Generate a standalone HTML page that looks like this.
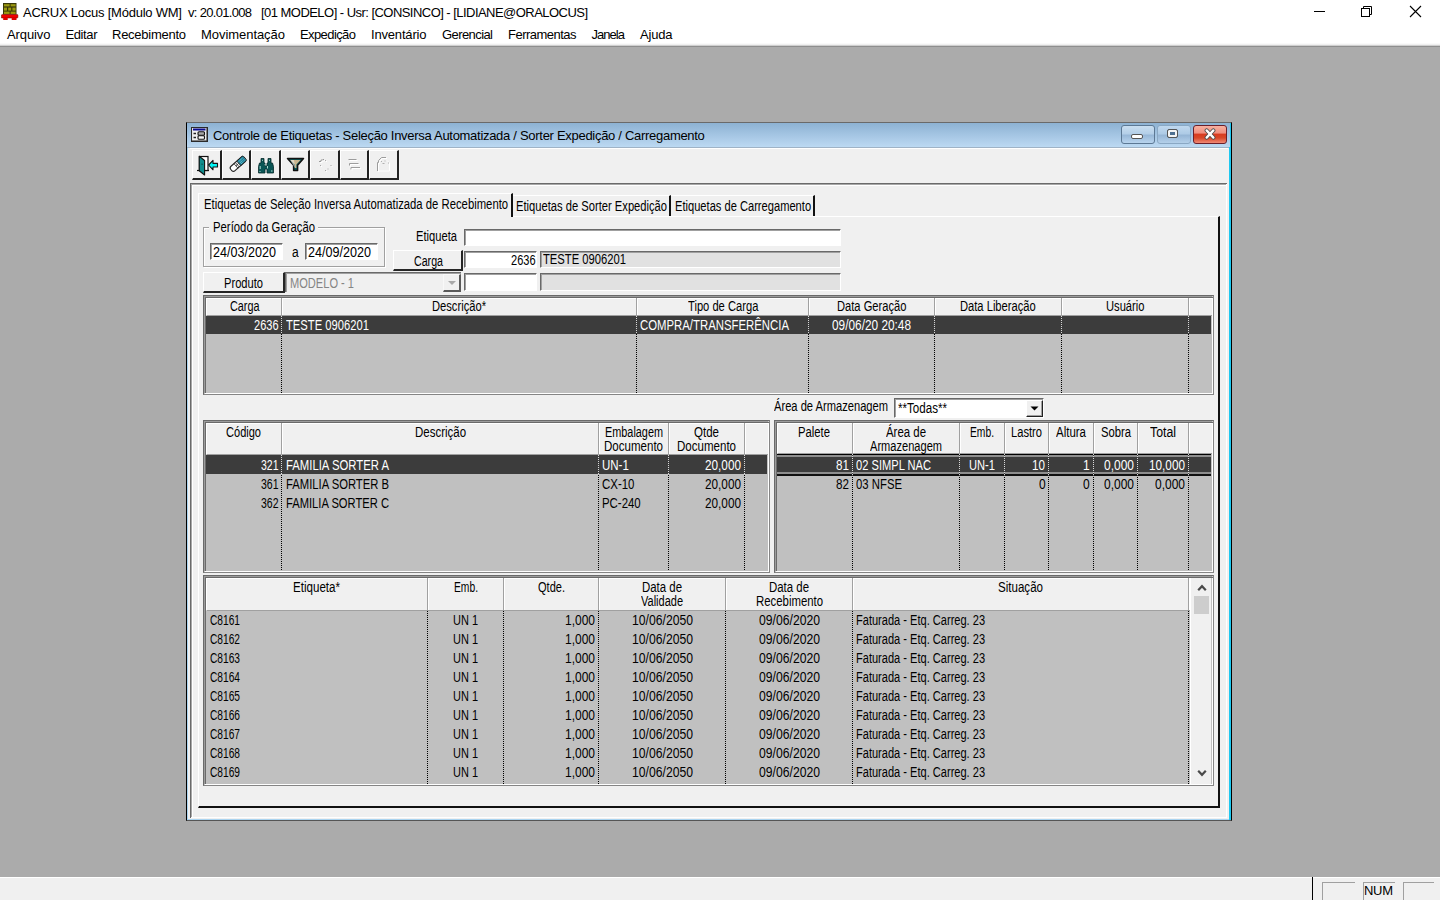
<!DOCTYPE html>
<html><head><meta charset="utf-8">
<style>
*{box-sizing:border-box}
html,body{margin:0;padding:0}
body{width:1440px;height:900px;position:relative;overflow:hidden;background:#ababab;font-family:"Liberation Sans",sans-serif;color:#000}
.a{position:absolute}
.t{position:absolute;white-space:pre}
</style></head><body>
<div class="a" style="left:0px;top:0px;width:1440px;height:46px;background:#fff"></div>
<div class="a" style="left:0px;top:43px;width:1440px;height:1px;background:#fafafa"></div>
<div class="a" style="left:0px;top:44px;width:1440px;height:1px;background:#f0f0f0"></div>
<div class="a" style="left:0px;top:45px;width:1440px;height:1px;background:#cfcfcf"></div>
<div class="a" style="left:0px;top:46px;width:1440px;height:1px;background:#8e8e8e"></div>
<svg class="a" style="left:1px;top:3px" width="18" height="18" viewBox="0 0 18 18">
<rect x="2" y="0" width="13.5" height="11.6" fill="#3a3808"/>
<rect x="3" y="1.2" width="5.6" height="2.2" fill="#9c9a10"/><rect x="9.6" y="1.2" width="5" height="2.2" fill="#9c9a10"/>
<rect x="3" y="4.6" width="3" height="3" fill="#9c9a10"/><rect x="7.2" y="4.6" width="3" height="3" fill="#9c9a10"/><rect x="11.4" y="4.6" width="3.2" height="3" fill="#9c9a10"/>
<rect x="3" y="8.6" width="5.6" height="2.4" fill="#9c9a10"/><rect x="9.6" y="8.6" width="5" height="2.4" fill="#9c9a10"/>
<path d="M0.5 12.2Q0.5 11.4 1.5 11.4H16Q16.9 11.4 16.9 12.2V14.3Q16.9 15 16 15H0.5Z" fill="#f00000" stroke="#600" stroke-width="0.5"/>
<rect x="2.2" y="14.6" width="4.5" height="2.4" fill="#e00000"/><rect x="10.7" y="14.6" width="4.8" height="2.4" fill="#e00000"/>
</svg>
<div class="t" style="left:23px;top:6.00px;font-size:13px;line-height:13px;letter-spacing:-0.228px;color:#000;">ACRUX Locus [Módulo WM]</div>
<div class="t" style="left:188px;top:6.00px;font-size:13px;line-height:13px;letter-spacing:-0.689px;color:#000;">v: 20.01.008</div>
<div class="t" style="left:261px;top:6.00px;font-size:13px;line-height:13px;letter-spacing:-0.539px;color:#000;">[01 MODELO] - Usr: [CONSINCO] - [LIDIANE@ORALOCUS]</div>
<div class="a" style="left:1314px;top:11px;width:11px;height:1px;background:#000"></div>
<svg class="a" style="left:1360px;top:5px" width="14" height="13" viewBox="0 0 14 13">
<rect x="1.5" y="3.5" width="8" height="8" fill="none" stroke="#000"/>
<path d="M3.5 3.5V1.5h8v8h-2" fill="none" stroke="#000"/></svg>
<svg class="a" style="left:1409px;top:5px" width="13" height="13" viewBox="0 0 13 13">
<path d="M1 1L12 12M12 1L1 12" stroke="#000" stroke-width="1.1"/></svg>
<div class="t" style="left:7px;top:28.00px;font-size:13px;line-height:13px;letter-spacing:-0.099px;color:#000;">Arquivo</div>
<div class="t" style="left:65.5px;top:28.00px;font-size:13px;line-height:13px;letter-spacing:-0.394px;color:#000;">Editar</div>
<div class="t" style="left:112px;top:28.00px;font-size:13px;line-height:13px;letter-spacing:-0.263px;color:#000;">Recebimento</div>
<div class="t" style="left:201px;top:28.00px;font-size:13px;line-height:13px;letter-spacing:-0.051px;color:#000;">Movimentação</div>
<div class="t" style="left:300px;top:28.00px;font-size:13px;line-height:13px;letter-spacing:-0.592px;color:#000;">Expedição</div>
<div class="t" style="left:371px;top:28.00px;font-size:13px;line-height:13px;letter-spacing:-0.179px;color:#000;">Inventário</div>
<div class="t" style="left:442px;top:28.00px;font-size:13px;line-height:13px;letter-spacing:-0.582px;color:#000;">Gerencial</div>
<div class="t" style="left:508px;top:28.00px;font-size:13px;line-height:13px;letter-spacing:-0.520px;color:#000;">Ferramentas</div>
<div class="t" style="left:591.5px;top:28.00px;font-size:13px;line-height:13px;letter-spacing:-0.966px;color:#000;">Janela</div>
<div class="t" style="left:640px;top:28.00px;font-size:13px;line-height:13px;letter-spacing:-0.191px;color:#000;">Ajuda</div>
<div class="a" style="left:0px;top:877px;width:1440px;height:23px;background:#f0f0f0"></div>
<div class="a" style="left:0px;top:877px;width:1440px;height:1px;background:#fff"></div>
<div class="a" style="left:1312px;top:877px;width:1px;height:23px;background:#000"></div>
<div class="a" style="left:1322px;top:882px;width:33px;height:18px;border-top:1px solid #a0a0a0;border-left:1px solid #a0a0a0"></div>
<div class="a" style="left:1363px;top:882px;width:32px;height:18px;border-top:1px solid #a0a0a0;border-left:1px solid #a0a0a0"></div>
<div class="a" style="left:1403px;top:882px;width:31px;height:18px;border-top:1px solid #a0a0a0;border-left:1px solid #a0a0a0"></div>
<div class="t" style="left:1364px;top:884.00px;font-size:13px;line-height:13px;letter-spacing:-0.305px;color:#000;">NUM</div>
<div class="a" style="left:186px;top:122px;width:1046px;height:699px;background:#f0f0f0;border:1px solid #000;border-top-color:#6a6a6a;border-bottom-color:#555"></div>
<div class="a" style="left:187px;top:123px;width:1044px;height:697px;border:1px solid #aad4f0"></div>
<div class="a" style="left:1229px;top:123px;width:2px;height:697px;background:#1ec8f0"></div>
<div class="a" style="left:187px;top:123px;width:1043px;height:24px;background:linear-gradient(#8db2d3,#a9c9e6 60%,#bcd9f2)"></div>
<svg class="a" style="left:191px;top:127px" width="17" height="15" viewBox="0 0 17 15">
<rect x="0" y="0" width="17" height="15" fill="#2a2a2a"/>
<rect x="1" y="1" width="14.5" height="12.5" fill="#dcdcdc"/>
<rect x="1.5" y="1.5" width="13.5" height="11.5" fill="#f0f0f0"/>
<rect x="2" y="1.5" width="12.5" height="2" fill="#0a0a90"/>
<path d="M2.5 6.5h2.5M2.5 10.5h2.5" stroke="#222" stroke-width="1.3"/>
<rect x="7" y="4.8" width="6.5" height="3.4" rx="1" fill="#a8a8a8" stroke="#111" stroke-width="1.1"/>
<rect x="7" y="8.8" width="6.5" height="3.4" rx="1" fill="#f4f4f4" stroke="#111" stroke-width="1.1"/>
</svg>
<div class="t" style="left:213px;top:129.00px;font-size:13px;line-height:13px;letter-spacing:-0.292px;color:#000;">Controle de Etiquetas - Seleção Inversa Automatizada / Sorter Expedição / Carregamento</div>
<div class="a" style="left:1121px;top:125px;width:34px;height:19px;border:1px solid #5c7894;border-radius:3px;background:linear-gradient(#c9def0,#b4cfe8 45%,#98b8d8 55%,#b8d4ee)"></div>
<div class="a" style="left:1131px;top:134px;width:12px;height:5px;background:#fff;border:1px solid #555;border-radius:2px"></div>
<div class="a" style="left:1157px;top:125px;width:34px;height:19px;border:1px solid #8aa8c4;border-radius:3px;background:linear-gradient(#c0d8ee,#aecbe6 45%,#96b6d6 55%,#b4d0ea)"></div>
<div class="a" style="left:1167px;top:129px;width:11px;height:9px;border:1px solid #555;border-radius:2px;background:#4f7090;box-shadow:inset 0 0 0 2px #f4f4f4"></div>
<div class="a" style="left:1193px;top:125px;width:34px;height:19px;border:1px solid #6a1f2a;border-radius:3px;background:linear-gradient(#f8b0a0,#f09080 40%,#d83c20 50%,#d84828 70%,#f08a78)"></div>
<svg class="a" style="left:1203px;top:128px" width="14" height="12" viewBox="0 0 14 12">
<path d="M3.6 2.4L10.4 9.6M10.4 2.4L3.6 9.6" stroke="#4a4a4a" stroke-width="4" stroke-linecap="round"/>
<path d="M3.6 2.4L10.4 9.6M10.4 2.4L3.6 9.6" stroke="#fff" stroke-width="2.3" stroke-linecap="round"/></svg>
<div class="a" style="left:187px;top:147px;width:1042px;height:1px;background:#9fb3c6"></div>
<div class="a" style="left:190px;top:148px;width:1038px;height:1px;background:#fff"></div>
<div class="a" style="left:192px;top:150px;width:30px;height:30px;border-left:1px solid #fff;border-top:1px solid #fff;border-right:2px solid #222;border-bottom:2px solid #222;background:#f0f0f0"></div>
<div class="a" style="left:222px;top:150px;width:29px;height:30px;border-left:1px solid #fff;border-top:1px solid #fff;border-right:2px solid #222;border-bottom:2px solid #222;background:#f0f0f0"></div>
<div class="a" style="left:251px;top:150px;width:30px;height:30px;border-left:1px solid #fff;border-top:1px solid #fff;border-right:2px solid #222;border-bottom:2px solid #222;background:#f0f0f0"></div>
<div class="a" style="left:281px;top:150px;width:29px;height:30px;border-left:1px solid #fff;border-top:1px solid #fff;border-right:2px solid #222;border-bottom:2px solid #222;background:#f0f0f0"></div>
<div class="a" style="left:310px;top:150px;width:30px;height:30px;border-left:1px solid #fff;border-top:1px solid #fff;border-right:2px solid #222;border-bottom:2px solid #222;background:#f0f0f0"></div>
<div class="a" style="left:340px;top:150px;width:29px;height:30px;border-left:1px solid #fff;border-top:1px solid #fff;border-right:2px solid #222;border-bottom:2px solid #222;background:#f0f0f0"></div>
<div class="a" style="left:369px;top:150px;width:30px;height:30px;border-left:1px solid #fff;border-top:1px solid #fff;border-right:2px solid #222;border-bottom:2px solid #222;background:#f0f0f0"></div>
<svg class="a" style="left:196px;top:154px" width="24" height="24" viewBox="0 0 24 24">
<path d="M1 16.5H13" stroke="#111" stroke-width="1.2"/>
<rect x="3.5" y="2.5" width="8.5" height="14" fill="#fff" stroke="#111" stroke-width="1.2"/>
<path d="M3.2 2.3L8.6 6.5V21L3.2 16.8Z" fill="#0f8e8e" stroke="#111" stroke-width="1.1" stroke-linejoin="round"/>
<path d="M5.5 10.2h1.2" stroke="#0a3030" stroke-width="0.9"/>
<path d="M12.6 11L17 6.4V9.4H21.5V13H17V15.8Z" fill="#00f4f4" stroke="#111" stroke-width="1.1" stroke-linejoin="round"/>
</svg>
<svg class="a" style="left:226px;top:152px" width="24" height="24" viewBox="0 0 24 24">
<g transform="translate(12,12) rotate(-42)">
<rect x="-9" y="-3" width="18" height="6" rx="2.3" fill="#fff" stroke="#222" stroke-width="1.1"/>
<path d="M1 -3H8 Q9 -3 9 -2V2Q9 3 8 3H1Z" fill="#1f7f98" stroke="#222" stroke-width="0.9"/>
<path d="M2.3 -1.4H8.3M2.3 0.4H8.3M2.3 2H8.3" stroke="#8ae6f0" stroke-width="0.8" stroke-dasharray="1 0.8"/>
<path d="M-2.8 -3.1V3.1M-1 -3.1V3.1M-2.8 0H1" stroke="#333" stroke-width="0.8"/>
</g></svg>
<svg class="a" style="left:257px;top:157px" width="18" height="18" viewBox="0 0 18 18">
<path d="M4 1.5h3v4.5h1v3h2v-3h1v-4.5h3v4.5h1.5l1 3.5v6.5h-6.5v-4h-2v4h-6.5v-6.5l1-3.5h1.5Z" fill="#0b5656" stroke="#062a2a" stroke-width="0.8"/>
<path d="M5.5 2.8v1M12.5 2.8v1M3.2 9v3M10.5 9v2.5M2.5 14.5h1M14 14h1.5M7.5 7.8h1" stroke="#bfe8e0" stroke-width="0.9"/>
</svg>
<svg class="a" style="left:286px;top:157px" width="19" height="16" viewBox="0 0 19 16">
<path d="M1.5 1.6H17.5L11.6 8.2V13.4H7.6V8.2Z" fill="#0a5a5a" stroke="#111" stroke-width="1.5" stroke-linejoin="round"/>
<path d="M4.3 3.1H14.5L10.4 7.6V11H8.9V7.6Z" fill="#c8b48e"/>
<path d="M4.3 3.1H8L8.9 9V11" fill="#f4f0e8" opacity="0.6"/>
</svg>
<svg class="a" style="left:316px;top:155px" width="20" height="20" viewBox="0 0 20 20">
<path d="M3 6.5h2v-1.5h2.5v-1" fill="none" stroke="#9a9a9a" stroke-width="1"/>
<path d="M4 7.5h2v-1.5h2.5v-1" fill="none" stroke="#fff" stroke-width="1"/>
<path d="M9 5.5h1M4 10.5h1M14.5 10.5h1M9 15.5h1M11.5 14h1" stroke="#a8a8a8" stroke-width="1"/>
<path d="M10 6.5h1M5 11.5h1M15.5 11.5h1M10 16.5h1" stroke="#fff" stroke-width="1"/>
</svg>
<svg class="a" style="left:345px;top:155px" width="20" height="18" viewBox="0 0 20 18">
<path d="M3.5 4.5h8M4.5 8.5h9M4.5 8.5v2M6 12.5h9M6 12.5v2" fill="none" stroke="#9c9c9c" stroke-width="1"/>
<path d="M4.5 5.5h8M5.5 9.5h9M5.5 9.5v2M7 13.5h9M7 13.5v2" fill="none" stroke="#fff" stroke-width="1"/>
</svg>
<svg class="a" style="left:374px;top:154px" width="20" height="20" viewBox="0 0 20 20">
<path d="M3.5 17V8.5H4.5V6.5L7.5 3.5H12" fill="none" stroke="#9c9c9c" stroke-width="1"/>
<path d="M4.5 18V9.5H5.5V7.5L8.5 4.5H13M13 6.5L15.5 9V17H4.5" fill="none" stroke="#fff" stroke-width="1"/>
<path d="M7 7.5h1M10.5 7h1M8.5 9.5h2M14 9h1" stroke="#b0b0b0" stroke-width="1"/>
</svg>
<div class="a" style="left:190px;top:183px;width:1037px;height:1px;background:#6a6a6a"></div>
<div class="a" style="left:190px;top:184px;width:1037px;height:1px;background:#a8a8a8"></div>
<div class="a" style="left:190px;top:183px;width:1px;height:635px;background:#6a6a6a"></div>
<div class="a" style="left:191px;top:184px;width:1px;height:634px;background:#a8a8a8"></div>
<div class="a" style="left:192px;top:185px;width:1035px;height:1px;background:#fff"></div>
<div class="a" style="left:192px;top:185px;width:1px;height:632px;background:#fff"></div>
<div class="a" style="left:1226px;top:184px;width:1px;height:634px;background:#fff"></div>
<div class="a" style="left:191px;top:817px;width:1036px;height:1px;background:#fff"></div>
<div class="a" style="left:198px;top:216px;width:1022px;height:592px;border-top:1px solid #fff;border-left:1px solid #fff;border-right:2px solid #111;border-bottom:2px solid #111"></div>
<div class="a" style="left:198px;top:193px;width:315px;height:24px;border-top:1px solid #fff;border-left:1px solid #fff;border-right:2px solid #111;background:#f0f0f0"></div>
<div class="a" style="left:513px;top:195px;width:158px;height:21px;border-top:1px solid #fff;border-right:2px solid #111"></div>
<div class="a" style="left:671px;top:195px;width:144px;height:21px;border-top:1px solid #fff;border-right:2px solid #111"></div>
<div class="t" style="left:204px;top:197.15px;font-size:14px;line-height:14px;color:#000;transform:scaleX(0.8073);transform-origin:0 0;">Etiquetas de Seleção Inversa Automatizada de Recebimento</div>
<div class="t" style="left:516px;top:199.15px;font-size:14px;line-height:14px;color:#000;transform:scaleX(0.7987);transform-origin:0 0;">Etiquetas de Sorter Expedição</div>
<div class="t" style="left:675px;top:199.15px;font-size:14px;line-height:14px;color:#000;transform:scaleX(0.7947);transform-origin:0 0;">Etiquetas de Carregamento</div>
<div class="a" style="left:203px;top:227px;width:182px;height:40px;border:1px solid #a0a0a0;box-shadow:1px 1px 0 #fff, inset 1px 1px 0 #fff"></div>
<div class="a" style="left:209px;top:222px;width:109px;height:10px;background:#f0f0f0"></div>
<div class="t" style="left:213px;top:220.15px;font-size:14px;line-height:14px;color:#000;transform:scaleX(0.8093);transform-origin:0 0;">Período da Geração</div>
<div class="a" style="left:210px;top:243px;width:73px;height:17px;background:#fff;border-top:1px solid #696969;border-left:1px solid #696969;border-bottom:1px solid #fff;border-right:1px solid #fff;box-shadow:inset 1px 1px 0 #a0a0a0"></div>
<div class="t" style="left:213px;top:245.15px;font-size:14px;line-height:14px;color:#000;transform:scaleX(0.8996);transform-origin:0 0;">24/03/2020</div>
<div class="t" style="left:292px;top:245.15px;font-size:14px;line-height:14px;color:#000;transform:scaleX(0.8574);transform-origin:0 0;">a</div>
<div class="a" style="left:305px;top:243px;width:73px;height:17px;background:#fff;border-top:1px solid #696969;border-left:1px solid #696969;border-bottom:1px solid #fff;border-right:1px solid #fff;box-shadow:inset 1px 1px 0 #a0a0a0"></div>
<div class="t" style="left:308px;top:245.15px;font-size:14px;line-height:14px;color:#000;transform:scaleX(0.8996);transform-origin:0 0;">24/09/2020</div>
<div class="t" style="left:416px;top:229.15px;font-size:14px;line-height:14px;color:#000;transform:scaleX(0.7983);transform-origin:0 0;">Etiqueta</div>
<div class="a" style="left:464px;top:229px;width:377px;height:17px;background:#fff;border-top:1px solid #696969;border-left:1px solid #696969;border-bottom:1px solid #fff;border-right:1px solid #fff;box-shadow:inset 1px 1px 0 #a0a0a0"></div>
<div class="a" style="left:393px;top:250px;width:70px;height:21px;background:#f0f0f0;border-top:1px solid #fff;border-left:1px solid #fff;border-bottom:2px solid #262626;border-right:2px solid #262626"></div>
<div class="t" style="left:414px;top:254.15px;font-size:14px;line-height:14px;color:#000;transform:scaleX(0.7610);transform-origin:0 0;">Carga</div>
<div class="a" style="left:464px;top:251px;width:73px;height:17px;background:#fff;border-top:1px solid #696969;border-left:1px solid #696969;border-bottom:1px solid #fff;border-right:1px solid #fff;box-shadow:inset 1px 1px 0 #a0a0a0"></div>
<div class="t" style="left:510.5px;top:252.55px;font-size:14px;line-height:14px;color:#000;transform:scaleX(0.7871);transform-origin:0 0;">2636</div>
<div class="a" style="left:540px;top:251px;width:301px;height:17px;background:#e1e1e1;border-top:1px solid #696969;border-left:1px solid #696969;border-bottom:1px solid #fff;border-right:1px solid #fff;box-shadow:inset 1px 1px 0 #a0a0a0"></div>
<div class="t" style="left:543px;top:252.15px;font-size:14px;line-height:14px;color:#000;transform:scaleX(0.8021);transform-origin:0 0;">TESTE 0906201</div>
<div class="a" style="left:203px;top:272px;width:82px;height:21px;background:#f0f0f0;border-top:1px solid #fff;border-left:1px solid #fff;border-bottom:2px solid #262626;border-right:2px solid #262626"></div>
<div class="t" style="left:224px;top:276.15px;font-size:14px;line-height:14px;color:#000;transform:scaleX(0.7957);transform-origin:0 0;">Produto</div>
<div class="a" style="left:285px;top:272px;width:176px;height:20px;background:#f0f0f0;border-top:1px solid #6a6a6a;border-left:1px solid #6a6a6a;box-shadow:inset 1px 1px 0 #a0a0a0"></div>
<div class="t" style="left:290px;top:276.15px;font-size:14px;line-height:14px;color:#858585;transform:scaleX(0.7912);transform-origin:0 0;">MODELO - 1</div>
<div class="a" style="left:443px;top:274px;width:18px;height:18px;background:#f0f0f0;border-top:1px solid #f8f8f8;border-left:1px solid #f8f8f8;border-bottom:2px solid #5a5a5a;border-right:2px solid #5a5a5a"></div>
<svg class="a" style="left:447px;top:280px" width="10" height="6" viewBox="0 0 10 6"><path d="M1 1h8L5 5Z" fill="#a8a8a8"/></svg>
<div class="a" style="left:464px;top:273px;width:73px;height:18px;background:#fff;border-top:1px solid #696969;border-left:1px solid #696969;border-bottom:1px solid #fff;border-right:1px solid #fff;box-shadow:inset 1px 1px 0 #a0a0a0"></div>
<div class="a" style="left:540px;top:273px;width:301px;height:18px;background:#e1e1e1;border-top:1px solid #696969;border-left:1px solid #696969;border-bottom:1px solid #fff;border-right:1px solid #fff;box-shadow:inset 1px 1px 0 #a0a0a0"></div>
<div class="a" style="left:203px;top:295px;width:1011px;height:100px;background:#c0c0c0;border-top:1px solid #6a6a6a;border-left:1px solid #6a6a6a;border-bottom:1px solid #858585;border-right:1px solid #858585"></div>
<div class="a" style="left:204px;top:296px;width:1009px;height:98px;border-top:1px solid #9c9c9c;border-left:1px solid #9c9c9c;border-bottom:1px solid #fff;border-right:1px solid #fff"></div>
<div class="a" style="left:205px;top:297px;width:1008px;height:1px;background:#6a6a6a"></div>
<div class="a" style="left:205px;top:297px;width:1px;height:96px;background:#6a6a6a"></div>
<div class="a" style="left:206px;top:298px;width:1006px;height:18px;background:#f0f0f0;border-top:1px solid #fff;border-left:1px solid #fff;border-bottom:1px solid #a0a0a0"></div>
<div class="a" style="left:281px;top:298px;width:1px;height:18px;background:#a0a0a0"></div>
<div class="a" style="left:282px;top:298px;width:1px;height:17px;background:#fff"></div>
<div class="a" style="left:636px;top:298px;width:1px;height:18px;background:#a0a0a0"></div>
<div class="a" style="left:637px;top:298px;width:1px;height:17px;background:#fff"></div>
<div class="a" style="left:808px;top:298px;width:1px;height:18px;background:#a0a0a0"></div>
<div class="a" style="left:809px;top:298px;width:1px;height:17px;background:#fff"></div>
<div class="a" style="left:934px;top:298px;width:1px;height:18px;background:#a0a0a0"></div>
<div class="a" style="left:935px;top:298px;width:1px;height:17px;background:#fff"></div>
<div class="a" style="left:1061px;top:298px;width:1px;height:18px;background:#a0a0a0"></div>
<div class="a" style="left:1062px;top:298px;width:1px;height:17px;background:#fff"></div>
<div class="a" style="left:1188px;top:298px;width:1px;height:18px;background:#a0a0a0"></div>
<div class="a" style="left:1189px;top:298px;width:1px;height:17px;background:#fff"></div>
<div class="a" style="left:206px;top:316px;width:1005px;height:18px;background:#3c3c3c"></div>
<div class="a" style="left:281px;top:316px;width:1px;height:77px;background:repeating-linear-gradient(to bottom,#000 0 1px,transparent 1px 2px)"></div>
<div class="a" style="left:281px;top:316px;width:1px;height:18px;background:repeating-linear-gradient(to bottom,#d8d8d8 0 1px,#3c3c3c 1px 2px)"></div>
<div class="a" style="left:636px;top:316px;width:1px;height:77px;background:repeating-linear-gradient(to bottom,#000 0 1px,transparent 1px 2px)"></div>
<div class="a" style="left:636px;top:316px;width:1px;height:18px;background:repeating-linear-gradient(to bottom,#d8d8d8 0 1px,#3c3c3c 1px 2px)"></div>
<div class="a" style="left:808px;top:316px;width:1px;height:77px;background:repeating-linear-gradient(to bottom,#000 0 1px,transparent 1px 2px)"></div>
<div class="a" style="left:808px;top:316px;width:1px;height:18px;background:repeating-linear-gradient(to bottom,#d8d8d8 0 1px,#3c3c3c 1px 2px)"></div>
<div class="a" style="left:934px;top:316px;width:1px;height:77px;background:repeating-linear-gradient(to bottom,#000 0 1px,transparent 1px 2px)"></div>
<div class="a" style="left:934px;top:316px;width:1px;height:18px;background:repeating-linear-gradient(to bottom,#d8d8d8 0 1px,#3c3c3c 1px 2px)"></div>
<div class="a" style="left:1061px;top:316px;width:1px;height:77px;background:repeating-linear-gradient(to bottom,#000 0 1px,transparent 1px 2px)"></div>
<div class="a" style="left:1061px;top:316px;width:1px;height:18px;background:repeating-linear-gradient(to bottom,#d8d8d8 0 1px,#3c3c3c 1px 2px)"></div>
<div class="a" style="left:1188px;top:316px;width:1px;height:77px;background:repeating-linear-gradient(to bottom,#000 0 1px,transparent 1px 2px)"></div>
<div class="a" style="left:1188px;top:316px;width:1px;height:18px;background:repeating-linear-gradient(to bottom,#d8d8d8 0 1px,#3c3c3c 1px 2px)"></div>
<div class="t" style="left:230.0px;top:298.65px;font-size:14px;line-height:14px;color:#000;transform:scaleX(0.7741);transform-origin:0 0;">Carga</div>
<div class="t" style="left:432.0px;top:298.65px;font-size:14px;line-height:14px;color:#000;transform:scaleX(0.7975);transform-origin:0 0;">Descrição*</div>
<div class="t" style="left:687.5px;top:298.65px;font-size:14px;line-height:14px;color:#000;transform:scaleX(0.7975);transform-origin:0 0;">Tipo de Carga</div>
<div class="t" style="left:837.0px;top:298.65px;font-size:14px;line-height:14px;color:#000;transform:scaleX(0.7972);transform-origin:0 0;">Data Geração</div>
<div class="t" style="left:960.0px;top:298.65px;font-size:14px;line-height:14px;color:#000;transform:scaleX(0.7974);transform-origin:0 0;">Data Liberação</div>
<div class="t" style="left:1106.0px;top:298.65px;font-size:14px;line-height:14px;color:#000;transform:scaleX(0.7977);transform-origin:0 0;">Usuário</div>
<div class="t" style="left:253.5px;top:318.15px;font-size:14px;line-height:14px;color:#fff;transform:scaleX(0.7871);transform-origin:0 0;">2636</div>
<div class="t" style="left:286px;top:318.15px;font-size:14px;line-height:14px;color:#fff;transform:scaleX(0.8021);transform-origin:0 0;">TESTE 0906201</div>
<div class="t" style="left:640px;top:318.15px;font-size:14px;line-height:14px;color:#fff;transform:scaleX(0.8116);transform-origin:0 0;">COMPRA/TRANSFERÊNCIA</div>
<div class="t" style="left:832px;top:318.15px;font-size:14px;line-height:14px;color:#fff;transform:scaleX(0.8461);transform-origin:0 0;">09/06/20 20:48</div>
<div class="t" style="left:774px;top:399.15px;font-size:14px;line-height:14px;color:#000;transform:scaleX(0.7964);transform-origin:0 0;">Área de Armazenagem</div>
<div class="a" style="left:894px;top:398px;width:150px;height:20px;background:#fff;border-top:1px solid #696969;border-left:1px solid #696969;border-bottom:1px solid #fff;border-right:1px solid #fff;box-shadow:inset 1px 1px 0 #a0a0a0"></div>
<div class="t" style="left:898px;top:401.15px;font-size:14px;line-height:14px;color:#000;transform:scaleX(0.8283);transform-origin:0 0;">**Todas**</div>
<div class="a" style="left:1026px;top:400px;width:17px;height:17px;background:#f0f0f0;border-top:1px solid #fff;border-left:1px solid #fff;border-bottom:1px solid #222;border-right:1px solid #222;box-shadow:inset -1px -1px 0 #a0a0a0"></div>
<svg class="a" style="left:1030px;top:406px" width="9" height="5" viewBox="0 0 9 5"><path d="M0.5 0.5h8L4.5 4.5Z" fill="#000"/></svg>
<div class="a" style="left:203px;top:420px;width:567px;height:153px;background:#c0c0c0;border-top:1px solid #6a6a6a;border-left:1px solid #6a6a6a;border-bottom:1px solid #858585;border-right:1px solid #858585"></div>
<div class="a" style="left:204px;top:421px;width:565px;height:151px;border-top:1px solid #9c9c9c;border-left:1px solid #9c9c9c;border-bottom:1px solid #fff;border-right:1px solid #fff"></div>
<div class="a" style="left:205px;top:422px;width:564px;height:1px;background:#6a6a6a"></div>
<div class="a" style="left:205px;top:422px;width:1px;height:149px;background:#6a6a6a"></div>
<div class="a" style="left:206px;top:423px;width:562px;height:32px;background:#f0f0f0;border-top:1px solid #fff;border-left:1px solid #fff;border-bottom:1px solid #a0a0a0"></div>
<div class="a" style="left:281px;top:423px;width:1px;height:32px;background:#a0a0a0"></div>
<div class="a" style="left:282px;top:423px;width:1px;height:31px;background:#fff"></div>
<div class="a" style="left:598px;top:423px;width:1px;height:32px;background:#a0a0a0"></div>
<div class="a" style="left:599px;top:423px;width:1px;height:31px;background:#fff"></div>
<div class="a" style="left:668px;top:423px;width:1px;height:32px;background:#a0a0a0"></div>
<div class="a" style="left:669px;top:423px;width:1px;height:31px;background:#fff"></div>
<div class="a" style="left:744px;top:423px;width:1px;height:32px;background:#a0a0a0"></div>
<div class="a" style="left:745px;top:423px;width:1px;height:31px;background:#fff"></div>
<div class="a" style="left:206px;top:455px;width:561px;height:19px;background:#3c3c3c"></div>
<div class="a" style="left:281px;top:455px;width:1px;height:115px;background:repeating-linear-gradient(to bottom,#000 0 1px,transparent 1px 2px)"></div>
<div class="a" style="left:281px;top:455px;width:1px;height:19px;background:repeating-linear-gradient(to bottom,#d8d8d8 0 1px,#3c3c3c 1px 2px)"></div>
<div class="a" style="left:598px;top:455px;width:1px;height:115px;background:repeating-linear-gradient(to bottom,#000 0 1px,transparent 1px 2px)"></div>
<div class="a" style="left:598px;top:455px;width:1px;height:19px;background:repeating-linear-gradient(to bottom,#d8d8d8 0 1px,#3c3c3c 1px 2px)"></div>
<div class="a" style="left:668px;top:455px;width:1px;height:115px;background:repeating-linear-gradient(to bottom,#000 0 1px,transparent 1px 2px)"></div>
<div class="a" style="left:668px;top:455px;width:1px;height:19px;background:repeating-linear-gradient(to bottom,#d8d8d8 0 1px,#3c3c3c 1px 2px)"></div>
<div class="a" style="left:744px;top:455px;width:1px;height:115px;background:repeating-linear-gradient(to bottom,#000 0 1px,transparent 1px 2px)"></div>
<div class="a" style="left:744px;top:455px;width:1px;height:19px;background:repeating-linear-gradient(to bottom,#d8d8d8 0 1px,#3c3c3c 1px 2px)"></div>
<div class="t" style="left:225.5px;top:425.15px;font-size:14px;line-height:14px;color:#000;transform:scaleX(0.7893);transform-origin:0 0;">Código</div>
<div class="t" style="left:414.5px;top:425.15px;font-size:14px;line-height:14px;color:#000;transform:scaleX(0.8197);transform-origin:0 0;">Descrição</div>
<div class="t" style="left:604.5px;top:425.15px;font-size:14px;line-height:14px;color:#000;transform:scaleX(0.7767);transform-origin:0 0;">Embalagem</div>
<div class="t" style="left:604.0px;top:439.15px;font-size:14px;line-height:14px;color:#000;transform:scaleX(0.8245);transform-origin:0 0;">Documento</div>
<div class="t" style="left:694.0px;top:425.15px;font-size:14px;line-height:14px;color:#000;transform:scaleX(0.8239);transform-origin:0 0;">Qtde</div>
<div class="t" style="left:677.0px;top:439.15px;font-size:14px;line-height:14px;color:#000;transform:scaleX(0.8245);transform-origin:0 0;">Documento</div>
<div class="t" style="left:260.5px;top:458.35px;font-size:14px;line-height:14px;color:#fff;transform:scaleX(0.7497);transform-origin:0 0;">321</div>
<div class="t" style="left:286px;top:458.35px;font-size:14px;line-height:14px;color:#fff;transform:scaleX(0.8086);transform-origin:0 0;">FAMILIA SORTER A</div>
<div class="t" style="left:602px;top:458.35px;font-size:14px;line-height:14px;color:#fff;transform:scaleX(0.8211);transform-origin:0 0;">UN-1</div>
<div class="t" style="left:705.0px;top:458.35px;font-size:14px;line-height:14px;color:#fff;transform:scaleX(0.8412);transform-origin:0 0;">20,000</div>
<div class="t" style="left:260.5px;top:477.35px;font-size:14px;line-height:14px;color:#000;transform:scaleX(0.7497);transform-origin:0 0;">361</div>
<div class="t" style="left:286px;top:477.35px;font-size:14px;line-height:14px;color:#000;transform:scaleX(0.8038);transform-origin:0 0;">FAMILIA SORTER B</div>
<div class="t" style="left:602px;top:477.35px;font-size:14px;line-height:14px;color:#000;transform:scaleX(0.8171);transform-origin:0 0;">CX-10</div>
<div class="t" style="left:705.0px;top:477.35px;font-size:14px;line-height:14px;color:#000;transform:scaleX(0.8412);transform-origin:0 0;">20,000</div>
<div class="t" style="left:260.5px;top:496.35px;font-size:14px;line-height:14px;color:#000;transform:scaleX(0.7497);transform-origin:0 0;">362</div>
<div class="t" style="left:286px;top:496.35px;font-size:14px;line-height:14px;color:#000;transform:scaleX(0.7990);transform-origin:0 0;">FAMILIA SORTER C</div>
<div class="t" style="left:602px;top:496.35px;font-size:14px;line-height:14px;color:#000;transform:scaleX(0.8153);transform-origin:0 0;">PC-240</div>
<div class="t" style="left:705.0px;top:496.35px;font-size:14px;line-height:14px;color:#000;transform:scaleX(0.8412);transform-origin:0 0;">20,000</div>
<div class="a" style="left:774px;top:420px;width:440px;height:153px;background:#c0c0c0;border-top:1px solid #6a6a6a;border-left:1px solid #6a6a6a;border-bottom:1px solid #858585;border-right:1px solid #858585"></div>
<div class="a" style="left:775px;top:421px;width:438px;height:151px;border-top:1px solid #9c9c9c;border-left:1px solid #9c9c9c;border-bottom:1px solid #fff;border-right:1px solid #fff"></div>
<div class="a" style="left:776px;top:422px;width:437px;height:1px;background:#6a6a6a"></div>
<div class="a" style="left:776px;top:422px;width:1px;height:149px;background:#6a6a6a"></div>
<div class="a" style="left:777px;top:423px;width:435px;height:31px;background:#f0f0f0;border-top:1px solid #fff;border-left:1px solid #fff;border-bottom:1px solid #a0a0a0"></div>
<div class="a" style="left:852px;top:423px;width:1px;height:31px;background:#a0a0a0"></div>
<div class="a" style="left:853px;top:423px;width:1px;height:30px;background:#fff"></div>
<div class="a" style="left:959px;top:423px;width:1px;height:31px;background:#a0a0a0"></div>
<div class="a" style="left:960px;top:423px;width:1px;height:30px;background:#fff"></div>
<div class="a" style="left:1004px;top:423px;width:1px;height:31px;background:#a0a0a0"></div>
<div class="a" style="left:1005px;top:423px;width:1px;height:30px;background:#fff"></div>
<div class="a" style="left:1048px;top:423px;width:1px;height:31px;background:#a0a0a0"></div>
<div class="a" style="left:1049px;top:423px;width:1px;height:30px;background:#fff"></div>
<div class="a" style="left:1093px;top:423px;width:1px;height:31px;background:#a0a0a0"></div>
<div class="a" style="left:1094px;top:423px;width:1px;height:30px;background:#fff"></div>
<div class="a" style="left:1137px;top:423px;width:1px;height:31px;background:#a0a0a0"></div>
<div class="a" style="left:1138px;top:423px;width:1px;height:30px;background:#fff"></div>
<div class="a" style="left:1188px;top:423px;width:1px;height:31px;background:#a0a0a0"></div>
<div class="a" style="left:1189px;top:423px;width:1px;height:30px;background:#fff"></div>
<div class="a" style="left:777px;top:454px;width:434px;height:22px;background:#3c3c3c"></div>
<div class="a" style="left:777px;top:454px;width:434px;height:1px;background:#000"></div>
<div class="a" style="left:777px;top:455px;width:434px;height:2px;background:#8e8e8e"></div>
<div class="a" style="left:777px;top:472px;width:434px;height:2px;background:#8e8e8e"></div>
<div class="a" style="left:777px;top:474px;width:434px;height:2px;background:#111"></div>
<div class="a" style="left:852px;top:455px;width:1px;height:115px;background:repeating-linear-gradient(to bottom,#000 0 1px,transparent 1px 2px)"></div>
<div class="a" style="left:852px;top:454px;width:1px;height:22px;background:repeating-linear-gradient(to bottom,#d8d8d8 0 1px,#3c3c3c 1px 2px)"></div>
<div class="a" style="left:959px;top:455px;width:1px;height:115px;background:repeating-linear-gradient(to bottom,#000 0 1px,transparent 1px 2px)"></div>
<div class="a" style="left:959px;top:454px;width:1px;height:22px;background:repeating-linear-gradient(to bottom,#d8d8d8 0 1px,#3c3c3c 1px 2px)"></div>
<div class="a" style="left:1004px;top:455px;width:1px;height:115px;background:repeating-linear-gradient(to bottom,#000 0 1px,transparent 1px 2px)"></div>
<div class="a" style="left:1004px;top:454px;width:1px;height:22px;background:repeating-linear-gradient(to bottom,#d8d8d8 0 1px,#3c3c3c 1px 2px)"></div>
<div class="a" style="left:1048px;top:455px;width:1px;height:115px;background:repeating-linear-gradient(to bottom,#000 0 1px,transparent 1px 2px)"></div>
<div class="a" style="left:1048px;top:454px;width:1px;height:22px;background:repeating-linear-gradient(to bottom,#d8d8d8 0 1px,#3c3c3c 1px 2px)"></div>
<div class="a" style="left:1093px;top:455px;width:1px;height:115px;background:repeating-linear-gradient(to bottom,#000 0 1px,transparent 1px 2px)"></div>
<div class="a" style="left:1093px;top:454px;width:1px;height:22px;background:repeating-linear-gradient(to bottom,#d8d8d8 0 1px,#3c3c3c 1px 2px)"></div>
<div class="a" style="left:1137px;top:455px;width:1px;height:115px;background:repeating-linear-gradient(to bottom,#000 0 1px,transparent 1px 2px)"></div>
<div class="a" style="left:1137px;top:454px;width:1px;height:22px;background:repeating-linear-gradient(to bottom,#d8d8d8 0 1px,#3c3c3c 1px 2px)"></div>
<div class="a" style="left:1188px;top:455px;width:1px;height:115px;background:repeating-linear-gradient(to bottom,#000 0 1px,transparent 1px 2px)"></div>
<div class="a" style="left:1188px;top:454px;width:1px;height:22px;background:repeating-linear-gradient(to bottom,#d8d8d8 0 1px,#3c3c3c 1px 2px)"></div>
<div class="t" style="left:798.0px;top:425.15px;font-size:14px;line-height:14px;color:#000;transform:scaleX(0.8063);transform-origin:0 0;">Palete</div>
<div class="t" style="left:886.0px;top:425.15px;font-size:14px;line-height:14px;color:#000;transform:scaleX(0.8161);transform-origin:0 0;">Área de</div>
<div class="t" style="left:870.0px;top:439.15px;font-size:14px;line-height:14px;color:#000;transform:scaleX(0.7912);transform-origin:0 0;">Armazenagem</div>
<div class="t" style="left:970.0px;top:425.15px;font-size:14px;line-height:14px;color:#000;transform:scaleX(0.7346);transform-origin:0 0;">Emb.</div>
<div class="t" style="left:1011.0px;top:425.15px;font-size:14px;line-height:14px;color:#000;transform:scaleX(0.7971);transform-origin:0 0;">Lastro</div>
<div class="t" style="left:1056.0px;top:425.15px;font-size:14px;line-height:14px;color:#000;transform:scaleX(0.8205);transform-origin:0 0;">Altura</div>
<div class="t" style="left:1100.5px;top:425.15px;font-size:14px;line-height:14px;color:#000;transform:scaleX(0.8033);transform-origin:0 0;">Sobra</div>
<div class="t" style="left:1150.0px;top:425.15px;font-size:14px;line-height:14px;color:#000;transform:scaleX(0.8795);transform-origin:0 0;">Total</div>
<div class="t" style="left:836.0px;top:458.35px;font-size:14px;line-height:14px;color:#fff;transform:scaleX(0.8317);transform-origin:0 0;">81</div>
<div class="t" style="left:856px;top:458.35px;font-size:14px;line-height:14px;color:#fff;transform:scaleX(0.7944);transform-origin:0 0;">02 SIMPL NAC</div>
<div class="t" style="left:969.0px;top:458.35px;font-size:14px;line-height:14px;color:#fff;transform:scaleX(0.7962);transform-origin:0 0;">UN-1</div>
<div class="t" style="left:1032.0px;top:458.35px;font-size:14px;line-height:14px;color:#fff;transform:scaleX(0.8317);transform-origin:0 0;">10</div>
<div class="t" style="left:1082.5px;top:458.35px;font-size:14px;line-height:14px;color:#fff;transform:scaleX(0.8574);transform-origin:0 0;">1</div>
<div class="t" style="left:1104.0px;top:458.35px;font-size:14px;line-height:14px;color:#fff;transform:scaleX(0.8568);transform-origin:0 0;">0,000</div>
<div class="t" style="left:1149.0px;top:458.35px;font-size:14px;line-height:14px;color:#fff;transform:scaleX(0.8412);transform-origin:0 0;">10,000</div>
<div class="t" style="left:836.0px;top:477.35px;font-size:14px;line-height:14px;color:#000;transform:scaleX(0.8317);transform-origin:0 0;">82</div>
<div class="t" style="left:856px;top:477.35px;font-size:14px;line-height:14px;color:#000;transform:scaleX(0.8099);transform-origin:0 0;">03 NFSE</div>
<div class="t" style="left:1038.5px;top:477.35px;font-size:14px;line-height:14px;color:#000;transform:scaleX(0.8574);transform-origin:0 0;">0</div>
<div class="t" style="left:1082.5px;top:477.35px;font-size:14px;line-height:14px;color:#000;transform:scaleX(0.8574);transform-origin:0 0;">0</div>
<div class="t" style="left:1104.0px;top:477.35px;font-size:14px;line-height:14px;color:#000;transform:scaleX(0.8568);transform-origin:0 0;">0,000</div>
<div class="t" style="left:1155.0px;top:477.35px;font-size:14px;line-height:14px;color:#000;transform:scaleX(0.8568);transform-origin:0 0;">0,000</div>
<div class="a" style="left:203px;top:575px;width:1011px;height:211px;background:#c0c0c0;border-top:1px solid #6a6a6a;border-left:1px solid #6a6a6a;border-bottom:1px solid #858585;border-right:1px solid #858585"></div>
<div class="a" style="left:204px;top:576px;width:1009px;height:209px;border-top:1px solid #9c9c9c;border-left:1px solid #9c9c9c;border-bottom:1px solid #fff;border-right:1px solid #fff"></div>
<div class="a" style="left:205px;top:577px;width:1008px;height:1px;background:#6a6a6a"></div>
<div class="a" style="left:205px;top:577px;width:1px;height:207px;background:#6a6a6a"></div>
<div class="a" style="left:206px;top:578px;width:984px;height:33px;background:#f0f0f0;border-top:1px solid #fff;border-left:1px solid #fff;border-bottom:1px solid #a0a0a0"></div>
<div class="a" style="left:427px;top:578px;width:1px;height:33px;background:#a0a0a0"></div>
<div class="a" style="left:428px;top:578px;width:1px;height:32px;background:#fff"></div>
<div class="a" style="left:503px;top:578px;width:1px;height:33px;background:#a0a0a0"></div>
<div class="a" style="left:504px;top:578px;width:1px;height:32px;background:#fff"></div>
<div class="a" style="left:598px;top:578px;width:1px;height:33px;background:#a0a0a0"></div>
<div class="a" style="left:599px;top:578px;width:1px;height:32px;background:#fff"></div>
<div class="a" style="left:725px;top:578px;width:1px;height:33px;background:#a0a0a0"></div>
<div class="a" style="left:726px;top:578px;width:1px;height:32px;background:#fff"></div>
<div class="a" style="left:852px;top:578px;width:1px;height:33px;background:#a0a0a0"></div>
<div class="a" style="left:853px;top:578px;width:1px;height:32px;background:#fff"></div>
<div class="a" style="left:1188px;top:578px;width:1px;height:33px;background:#a0a0a0"></div>
<div class="a" style="left:1189px;top:578px;width:1px;height:32px;background:#fff"></div>
<div class="a" style="left:427px;top:611px;width:1px;height:173px;background:repeating-linear-gradient(to bottom,#000 0 1px,transparent 1px 2px)"></div>
<div class="a" style="left:503px;top:611px;width:1px;height:173px;background:repeating-linear-gradient(to bottom,#000 0 1px,transparent 1px 2px)"></div>
<div class="a" style="left:598px;top:611px;width:1px;height:173px;background:repeating-linear-gradient(to bottom,#000 0 1px,transparent 1px 2px)"></div>
<div class="a" style="left:725px;top:611px;width:1px;height:173px;background:repeating-linear-gradient(to bottom,#000 0 1px,transparent 1px 2px)"></div>
<div class="a" style="left:852px;top:611px;width:1px;height:173px;background:repeating-linear-gradient(to bottom,#000 0 1px,transparent 1px 2px)"></div>
<div class="a" style="left:1188px;top:611px;width:1px;height:173px;background:repeating-linear-gradient(to bottom,#000 0 1px,transparent 1px 2px)"></div>
<div class="t" style="left:292.5px;top:580.15px;font-size:14px;line-height:14px;color:#000;transform:scaleX(0.8273);transform-origin:0 0;">Etiqueta*</div>
<div class="t" style="left:453.5px;top:580.15px;font-size:14px;line-height:14px;color:#000;transform:scaleX(0.7346);transform-origin:0 0;">Emb.</div>
<div class="t" style="left:537.5px;top:580.15px;font-size:14px;line-height:14px;color:#000;transform:scaleX(0.7887);transform-origin:0 0;">Qtde.</div>
<div class="t" style="left:642.0px;top:580.15px;font-size:14px;line-height:14px;color:#000;transform:scaleX(0.8161);transform-origin:0 0;">Data de</div>
<div class="t" style="left:641.0px;top:594.35px;font-size:14px;line-height:14px;color:#000;transform:scaleX(0.7860);transform-origin:0 0;">Validade</div>
<div class="t" style="left:769.0px;top:580.15px;font-size:14px;line-height:14px;color:#000;transform:scaleX(0.8161);transform-origin:0 0;">Data de</div>
<div class="t" style="left:755.5px;top:594.35px;font-size:14px;line-height:14px;color:#000;transform:scaleX(0.8126);transform-origin:0 0;">Recebimento</div>
<div class="t" style="left:998.0px;top:580.15px;font-size:14px;line-height:14px;color:#000;transform:scaleX(0.8262);transform-origin:0 0;">Situação</div>
<div class="t" style="left:210px;top:613.35px;font-size:14px;line-height:14px;color:#000;transform:scaleX(0.7275);transform-origin:0 0;">C8161</div>
<div class="t" style="left:453.0px;top:613.35px;font-size:14px;line-height:14px;color:#000;transform:scaleX(0.7839);transform-origin:0 0;">UN 1</div>
<div class="t" style="left:565.0px;top:613.35px;font-size:14px;line-height:14px;color:#000;transform:scaleX(0.8568);transform-origin:0 0;">1,000</div>
<div class="t" style="left:631.5px;top:613.35px;font-size:14px;line-height:14px;color:#000;transform:scaleX(0.8710);transform-origin:0 0;">10/06/2050</div>
<div class="t" style="left:758.5px;top:613.35px;font-size:14px;line-height:14px;color:#000;transform:scaleX(0.8710);transform-origin:0 0;">09/06/2020</div>
<div class="t" style="left:856px;top:613.35px;font-size:14px;line-height:14px;color:#000;transform:scaleX(0.7897);transform-origin:0 0;">Faturada - Etq. Carreg. 23</div>
<div class="t" style="left:210px;top:632.35px;font-size:14px;line-height:14px;color:#000;transform:scaleX(0.7275);transform-origin:0 0;">C8162</div>
<div class="t" style="left:453.0px;top:632.35px;font-size:14px;line-height:14px;color:#000;transform:scaleX(0.7839);transform-origin:0 0;">UN 1</div>
<div class="t" style="left:565.0px;top:632.35px;font-size:14px;line-height:14px;color:#000;transform:scaleX(0.8568);transform-origin:0 0;">1,000</div>
<div class="t" style="left:631.5px;top:632.35px;font-size:14px;line-height:14px;color:#000;transform:scaleX(0.8710);transform-origin:0 0;">10/06/2050</div>
<div class="t" style="left:758.5px;top:632.35px;font-size:14px;line-height:14px;color:#000;transform:scaleX(0.8710);transform-origin:0 0;">09/06/2020</div>
<div class="t" style="left:856px;top:632.35px;font-size:14px;line-height:14px;color:#000;transform:scaleX(0.7897);transform-origin:0 0;">Faturada - Etq. Carreg. 23</div>
<div class="t" style="left:210px;top:651.35px;font-size:14px;line-height:14px;color:#000;transform:scaleX(0.7275);transform-origin:0 0;">C8163</div>
<div class="t" style="left:453.0px;top:651.35px;font-size:14px;line-height:14px;color:#000;transform:scaleX(0.7839);transform-origin:0 0;">UN 1</div>
<div class="t" style="left:565.0px;top:651.35px;font-size:14px;line-height:14px;color:#000;transform:scaleX(0.8568);transform-origin:0 0;">1,000</div>
<div class="t" style="left:631.5px;top:651.35px;font-size:14px;line-height:14px;color:#000;transform:scaleX(0.8710);transform-origin:0 0;">10/06/2050</div>
<div class="t" style="left:758.5px;top:651.35px;font-size:14px;line-height:14px;color:#000;transform:scaleX(0.8710);transform-origin:0 0;">09/06/2020</div>
<div class="t" style="left:856px;top:651.35px;font-size:14px;line-height:14px;color:#000;transform:scaleX(0.7897);transform-origin:0 0;">Faturada - Etq. Carreg. 23</div>
<div class="t" style="left:210px;top:670.35px;font-size:14px;line-height:14px;color:#000;transform:scaleX(0.7275);transform-origin:0 0;">C8164</div>
<div class="t" style="left:453.0px;top:670.35px;font-size:14px;line-height:14px;color:#000;transform:scaleX(0.7839);transform-origin:0 0;">UN 1</div>
<div class="t" style="left:565.0px;top:670.35px;font-size:14px;line-height:14px;color:#000;transform:scaleX(0.8568);transform-origin:0 0;">1,000</div>
<div class="t" style="left:631.5px;top:670.35px;font-size:14px;line-height:14px;color:#000;transform:scaleX(0.8710);transform-origin:0 0;">10/06/2050</div>
<div class="t" style="left:758.5px;top:670.35px;font-size:14px;line-height:14px;color:#000;transform:scaleX(0.8710);transform-origin:0 0;">09/06/2020</div>
<div class="t" style="left:856px;top:670.35px;font-size:14px;line-height:14px;color:#000;transform:scaleX(0.7897);transform-origin:0 0;">Faturada - Etq. Carreg. 23</div>
<div class="t" style="left:210px;top:689.35px;font-size:14px;line-height:14px;color:#000;transform:scaleX(0.7275);transform-origin:0 0;">C8165</div>
<div class="t" style="left:453.0px;top:689.35px;font-size:14px;line-height:14px;color:#000;transform:scaleX(0.7839);transform-origin:0 0;">UN 1</div>
<div class="t" style="left:565.0px;top:689.35px;font-size:14px;line-height:14px;color:#000;transform:scaleX(0.8568);transform-origin:0 0;">1,000</div>
<div class="t" style="left:631.5px;top:689.35px;font-size:14px;line-height:14px;color:#000;transform:scaleX(0.8710);transform-origin:0 0;">10/06/2050</div>
<div class="t" style="left:758.5px;top:689.35px;font-size:14px;line-height:14px;color:#000;transform:scaleX(0.8710);transform-origin:0 0;">09/06/2020</div>
<div class="t" style="left:856px;top:689.35px;font-size:14px;line-height:14px;color:#000;transform:scaleX(0.7897);transform-origin:0 0;">Faturada - Etq. Carreg. 23</div>
<div class="t" style="left:210px;top:708.35px;font-size:14px;line-height:14px;color:#000;transform:scaleX(0.7275);transform-origin:0 0;">C8166</div>
<div class="t" style="left:453.0px;top:708.35px;font-size:14px;line-height:14px;color:#000;transform:scaleX(0.7839);transform-origin:0 0;">UN 1</div>
<div class="t" style="left:565.0px;top:708.35px;font-size:14px;line-height:14px;color:#000;transform:scaleX(0.8568);transform-origin:0 0;">1,000</div>
<div class="t" style="left:631.5px;top:708.35px;font-size:14px;line-height:14px;color:#000;transform:scaleX(0.8710);transform-origin:0 0;">10/06/2050</div>
<div class="t" style="left:758.5px;top:708.35px;font-size:14px;line-height:14px;color:#000;transform:scaleX(0.8710);transform-origin:0 0;">09/06/2020</div>
<div class="t" style="left:856px;top:708.35px;font-size:14px;line-height:14px;color:#000;transform:scaleX(0.7897);transform-origin:0 0;">Faturada - Etq. Carreg. 23</div>
<div class="t" style="left:210px;top:727.35px;font-size:14px;line-height:14px;color:#000;transform:scaleX(0.7275);transform-origin:0 0;">C8167</div>
<div class="t" style="left:453.0px;top:727.35px;font-size:14px;line-height:14px;color:#000;transform:scaleX(0.7839);transform-origin:0 0;">UN 1</div>
<div class="t" style="left:565.0px;top:727.35px;font-size:14px;line-height:14px;color:#000;transform:scaleX(0.8568);transform-origin:0 0;">1,000</div>
<div class="t" style="left:631.5px;top:727.35px;font-size:14px;line-height:14px;color:#000;transform:scaleX(0.8710);transform-origin:0 0;">10/06/2050</div>
<div class="t" style="left:758.5px;top:727.35px;font-size:14px;line-height:14px;color:#000;transform:scaleX(0.8710);transform-origin:0 0;">09/06/2020</div>
<div class="t" style="left:856px;top:727.35px;font-size:14px;line-height:14px;color:#000;transform:scaleX(0.7897);transform-origin:0 0;">Faturada - Etq. Carreg. 23</div>
<div class="t" style="left:210px;top:746.35px;font-size:14px;line-height:14px;color:#000;transform:scaleX(0.7275);transform-origin:0 0;">C8168</div>
<div class="t" style="left:453.0px;top:746.35px;font-size:14px;line-height:14px;color:#000;transform:scaleX(0.7839);transform-origin:0 0;">UN 1</div>
<div class="t" style="left:565.0px;top:746.35px;font-size:14px;line-height:14px;color:#000;transform:scaleX(0.8568);transform-origin:0 0;">1,000</div>
<div class="t" style="left:631.5px;top:746.35px;font-size:14px;line-height:14px;color:#000;transform:scaleX(0.8710);transform-origin:0 0;">10/06/2050</div>
<div class="t" style="left:758.5px;top:746.35px;font-size:14px;line-height:14px;color:#000;transform:scaleX(0.8710);transform-origin:0 0;">09/06/2020</div>
<div class="t" style="left:856px;top:746.35px;font-size:14px;line-height:14px;color:#000;transform:scaleX(0.7897);transform-origin:0 0;">Faturada - Etq. Carreg. 23</div>
<div class="t" style="left:210px;top:765.35px;font-size:14px;line-height:14px;color:#000;transform:scaleX(0.7275);transform-origin:0 0;">C8169</div>
<div class="t" style="left:453.0px;top:765.35px;font-size:14px;line-height:14px;color:#000;transform:scaleX(0.7839);transform-origin:0 0;">UN 1</div>
<div class="t" style="left:565.0px;top:765.35px;font-size:14px;line-height:14px;color:#000;transform:scaleX(0.8568);transform-origin:0 0;">1,000</div>
<div class="t" style="left:631.5px;top:765.35px;font-size:14px;line-height:14px;color:#000;transform:scaleX(0.8710);transform-origin:0 0;">10/06/2050</div>
<div class="t" style="left:758.5px;top:765.35px;font-size:14px;line-height:14px;color:#000;transform:scaleX(0.8710);transform-origin:0 0;">09/06/2020</div>
<div class="t" style="left:856px;top:765.35px;font-size:14px;line-height:14px;color:#000;transform:scaleX(0.7897);transform-origin:0 0;">Faturada - Etq. Carreg. 23</div>
<div class="a" style="left:1190px;top:578px;width:21px;height:206px;background:#f0f0f0;border-left:1px solid #fff"></div>
<div class="a" style="left:1194px;top:596px;width:15px;height:18px;background:#cdcdcd"></div>
<svg class="a" style="left:1197px;top:584px" width="10" height="8" viewBox="0 0 10 8"><path d="M1.2 6.2L5 2.2L8.8 6.2" fill="none" stroke="#4a4a4a" stroke-width="2.2"/></svg>
<svg class="a" style="left:1197px;top:769px" width="10" height="8" viewBox="0 0 10 8"><path d="M1.2 1.8L5 5.8L8.8 1.8" fill="none" stroke="#4a4a4a" stroke-width="2.2"/></svg>
</body></html>
